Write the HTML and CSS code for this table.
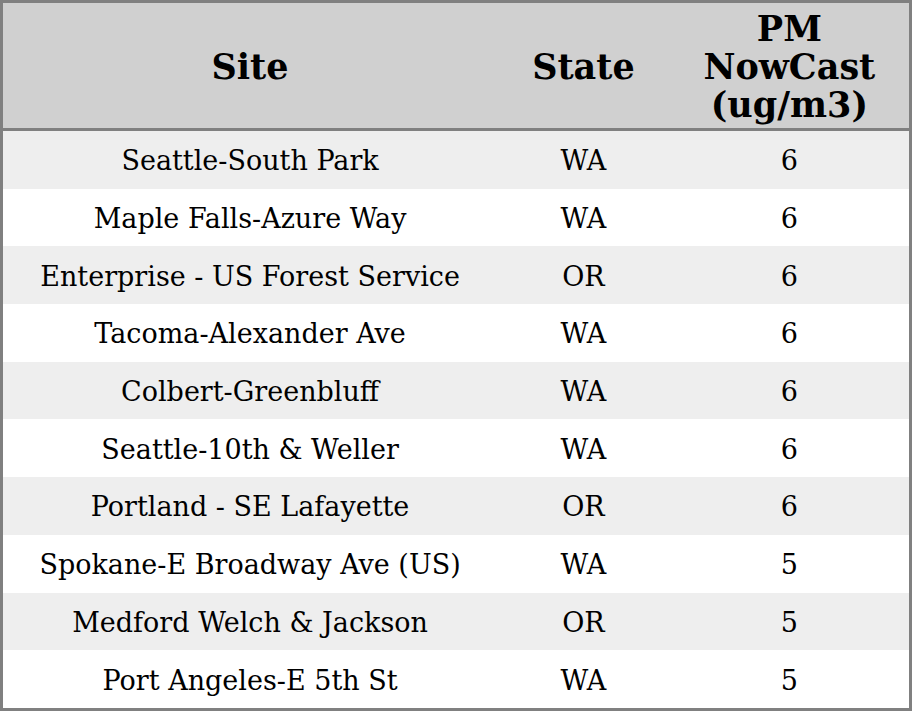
FILE: index.html
```html
<!DOCTYPE html>
<html>
<head>
<meta charset="utf-8">
<link rel="stylesheet" href="styles.css">
</head>
<body>
<table class="aq">
  <colgroup>
    <col class="c-site">
    <col class="c-state">
    <col class="c-pm">
  </colgroup>
  <thead>
    <tr>
      <th>Site</th>
      <th>State</th>
      <th>PM<br>NowCast<br>(ug/m3)</th>
    </tr>
  </thead>
  <tbody>
    <tr><td>Seattle-South Park</td><td>WA</td><td>6</td></tr>
    <tr><td>Maple Falls-Azure Way</td><td>WA</td><td>6</td></tr>
    <tr><td>Enterprise - US Forest Service</td><td>OR</td><td>6</td></tr>
    <tr><td>Tacoma-Alexander Ave</td><td>WA</td><td>6</td></tr>
    <tr><td>Colbert-Greenbluff</td><td>WA</td><td>6</td></tr>
    <tr><td>Seattle-10th &amp; Weller</td><td>WA</td><td>6</td></tr>
    <tr><td>Portland - SE Lafayette</td><td>OR</td><td>6</td></tr>
    <tr><td>Spokane-E Broadway Ave (US)</td><td>WA</td><td>5</td></tr>
    <tr><td>Medford Welch &amp; Jackson</td><td>OR</td><td>5</td></tr>
    <tr><td>Port Angeles-E 5th St</td><td>WA</td><td>5</td></tr>
  </tbody>
</table>
</body>
</html>
```
FILE: styles.css
```css
html, body {
  margin: 0;
  padding: 0;
  background: #ffffff;
}
.aq {
  width: 912px;
  height: 711px;
  border-collapse: collapse;
  border: 3px solid #808080;
  font-family: "DejaVu Serif", serif;
  color: #000;
  table-layout: fixed;
}
.c-site { width: 494px; }
.c-state { width: 172px; }
.c-pm { width: 240px; }
.aq th {
  background: #d0d0d0;
  font-size: 35px;
  font-weight: bold;
  line-height: 38px;
  height: 114px;
  padding: 7px 0 4px;
  text-align: center;
  border-bottom: 3px solid #808080;
}
.aq td {
  font-size: 27px;
  height: 55.7px;
  padding: 2px 0 0;
  text-align: center;
  vertical-align: middle;
}
.aq tbody tr:nth-child(odd) td {
  background: #eeeeee;
}
.aq tbody tr:nth-child(even) td {
  background: #ffffff;
}
```
